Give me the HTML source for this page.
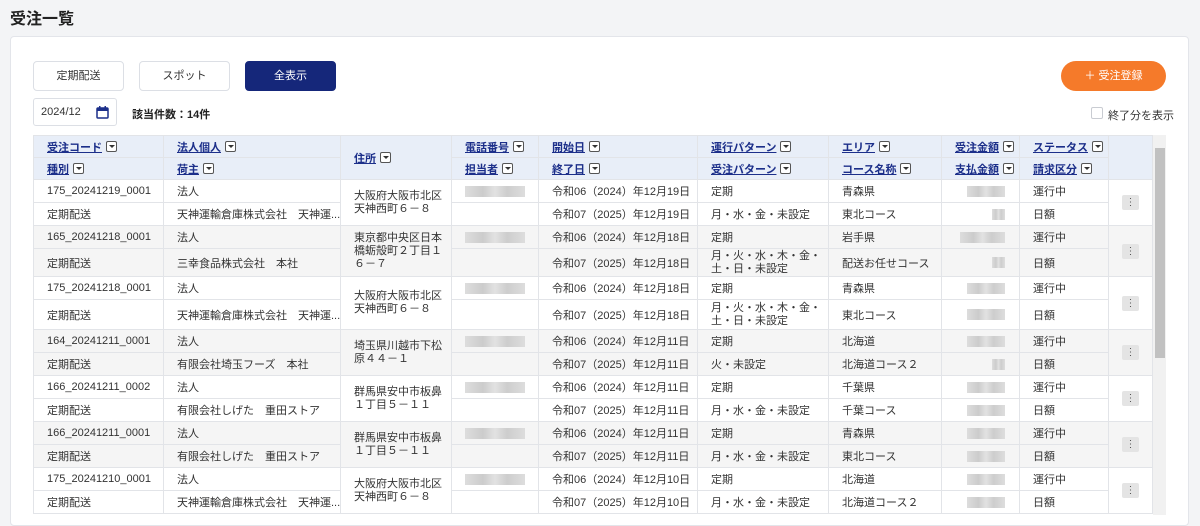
<!DOCTYPE html>
<html><head><meta charset="utf-8">
<style>
*{margin:0;padding:0;box-sizing:border-box}
body{width:1200px;height:515px;overflow:hidden;background:#f3f4f6;font-family:"Liberation Sans","Noto Sans CJK JP",sans-serif;color:#222;position:relative}
h1{position:absolute;left:10px;top:5px;font-size:16px;font-weight:bold;color:#222}
.panel{position:absolute;left:10px;top:36px;width:1179px;height:490px;background:#fff;border:1px solid #e3e5ea;border-radius:4px}
.btn{position:absolute;top:61px;height:30px;width:91px;border:1px solid #dcdfe5;border-radius:4px;background:#fff;font-size:11px;text-align:center;line-height:28px;color:#333}
.btn.on{background:#15277a;color:#fff;border-color:#15277a}
.date{position:absolute;left:33px;top:98px;width:84px;height:28px;border:1px solid #dcdfe5;border-radius:3px;font-size:11px;line-height:26px;padding-left:7px;color:#333}
.cnt{position:absolute;left:132px;top:106px;font-size:11px;font-weight:bold}
.reg{position:absolute;left:1061px;top:61px;width:105px;height:30px;border-radius:15px;background:#f57a2a;color:#fff;font-size:11px;text-align:center;line-height:30px}
.chk{position:absolute;left:1091px;top:107px;width:12px;height:12px;border:1px solid #c9ccd2;border-radius:2px;background:#fff}
.chkl{position:absolute;left:1108px;top:107px;font-size:11px;color:#333}
table{position:absolute;left:33px;top:135px;width:1119px;border-collapse:collapse;table-layout:fixed;font-size:11px}
td,th{border:1px solid #e2e4e8;padding:0 0 0 13px;text-align:left;font-weight:normal;white-space:nowrap;overflow:hidden;vertical-align:middle}
th{background:#e8eef8;height:22px;color:#1c2f8a;font-weight:bold}
th u{text-decoration:underline}
.dd{display:inline-block;width:11px;height:11px;border:1px solid #555;border-radius:2px;vertical-align:-1px;margin-left:4px;position:relative;background:#fff}
.dd:after{content:"";position:absolute;left:2px;top:3px;border-left:3px solid transparent;border-right:3px solid transparent;border-top:3.5px solid #333}
tr.g td{background:#f5f5f5}
td{height:23px;color:#333}
.bl{display:inline-block;width:60px;height:11px;background:linear-gradient(90deg,#ddd,#ccc 30%,#e2e2e2 50%,#cdcdcd 70%,#ddd);vertical-align:middle}
.am{text-align:right;padding-right:14px}
.am .bl{width:38px}
.am .sm{width:13px}
.kb{display:inline-block;width:17px;height:15px;background:#e4e4e4;border-radius:2px;text-align:center;line-height:15px;font-size:10px;color:#555}
.wrap{white-space:normal;line-height:13px}
.sb{position:absolute;left:1153px;top:135px;width:13px;height:380px;background:#f1f1f1}
.sbt{position:absolute;left:1155px;top:148px;width:10px;height:210px;background:#c1c1c1}
</style></head><body>
<h1>受注一覧</h1>
<div class="panel"></div>
<div class="btn" style="left:33px">定期配送</div>
<div class="btn" style="left:139px">スポット</div>
<div class="btn on" style="left:245px">全表示</div>
<div class="date">2024/12 <svg style="position:absolute;left:62px;top:7px" width="13" height="13" viewBox="0 0 13 13"><rect x="1" y="2" width="11" height="10" rx="1" fill="none" stroke="#1c2f8a" stroke-width="1.5"/><rect x="1" y="2" width="11" height="3" fill="#1c2f8a"/><rect x="3" y="0" width="1.5" height="3" fill="#1c2f8a"/><rect x="8.5" y="0" width="1.5" height="3" fill="#1c2f8a"/></svg></div>
<div class="cnt">該当件数：14件</div>
<div class="reg">＋ 受注登録</div>
<div class="chk"></div><div class="chkl">終了分を表示</div>
<table>
<colgroup><col style="width:130px"><col style="width:177px"><col style="width:111px"><col style="width:87px"><col style="width:159px"><col style="width:131px"><col style="width:113px"><col style="width:78px"><col style="width:89px"><col style="width:44px"></colgroup>
<tr><th><u>受注コード</u><span class="dd"></span></th><th><u>法人個人</u><span class="dd"></span></th><th rowspan="2"><u>住所</u><span class="dd"></span></th><th><u>電話番号</u><span class="dd"></span></th><th><u>開始日</u><span class="dd"></span></th><th><u>運行パターン</u><span class="dd"></span></th><th><u>エリア</u><span class="dd"></span></th><th><u>受注金額</u><span class="dd"></span></th><th><u>ステータス</u><span class="dd"></span></th><th rowspan="2"></th></tr>
<tr><th><u>種別</u><span class="dd"></span></th><th><u>荷主</u><span class="dd"></span></th><th><u>担当者</u><span class="dd"></span></th><th><u>終了日</u><span class="dd"></span></th><th><u>受注パターン</u><span class="dd"></span></th><th><u>コース名称</u><span class="dd"></span></th><th><u>支払金額</u><span class="dd"></span></th><th><u>請求区分</u><span class="dd"></span></th></tr>

<tr><td>175_20241219_0001</td><td>法人</td><td rowspan="2" class="wrap">大阪府大阪市北区<br>天神西町６－８</td><td><span class="bl"></span></td><td>令和06（2024）年12月19日</td><td>定期</td><td>青森県</td><td class="am"><span class="bl"></span></td><td>運行中</td><td rowspan="2"><span class="kb">⋮</span></td></tr>
<tr><td>定期配送</td><td>天神運輸倉庫株式会社　天神運...</td><td></td><td>令和07（2025）年12月19日</td><td>月・水・金・未設定</td><td>東北コース</td><td class="am"><span class="bl sm"></span></td><td>日額</td></tr>

<tr class="g"><td>165_20241218_0001</td><td>法人</td><td rowspan="2" class="wrap">東京都中央区日本<br>橋蛎殻町２丁目１<br>６－７</td><td><span class="bl"></span></td><td>令和06（2024）年12月18日</td><td>定期</td><td>岩手県</td><td class="am"><span class="bl" style="width:45px"></span></td><td>運行中</td><td rowspan="2"><span class="kb">⋮</span></td></tr>
<tr class="g"><td style="height:28px">定期配送</td><td>三幸食品株式会社　本社</td><td></td><td>令和07（2025）年12月18日</td><td class="wrap">月・火・水・木・金・<br>土・日・未設定</td><td>配送お任せコース</td><td class="am"><span class="bl sm"></span></td><td>日額</td></tr>

<tr><td>175_20241218_0001</td><td>法人</td><td rowspan="2" class="wrap">大阪府大阪市北区<br>天神西町６－８</td><td><span class="bl"></span></td><td>令和06（2024）年12月18日</td><td>定期</td><td>青森県</td><td class="am"><span class="bl"></span></td><td>運行中</td><td rowspan="2"><span class="kb">⋮</span></td></tr>
<tr><td style="height:30px">定期配送</td><td>天神運輸倉庫株式会社　天神運...</td><td></td><td>令和07（2025）年12月18日</td><td class="wrap">月・火・水・木・金・<br>土・日・未設定</td><td>東北コース</td><td class="am"><span class="bl"></span></td><td>日額</td></tr>

<tr class="g"><td>164_20241211_0001</td><td>法人</td><td rowspan="2" class="wrap">埼玉県川越市下松<br>原４４－１</td><td><span class="bl"></span></td><td>令和06（2024）年12月11日</td><td>定期</td><td>北海道</td><td class="am"><span class="bl"></span></td><td>運行中</td><td rowspan="2"><span class="kb">⋮</span></td></tr>
<tr class="g"><td>定期配送</td><td>有限会社埼玉フーズ　本社</td><td></td><td>令和07（2025）年12月11日</td><td>火・未設定</td><td>北海道コース２</td><td class="am"><span class="bl sm"></span></td><td>日額</td></tr>

<tr><td>166_20241211_0002</td><td>法人</td><td rowspan="2" class="wrap">群馬県安中市板鼻<br>１丁目５－１１</td><td><span class="bl"></span></td><td>令和06（2024）年12月11日</td><td>定期</td><td>千葉県</td><td class="am"><span class="bl"></span></td><td>運行中</td><td rowspan="2"><span class="kb">⋮</span></td></tr>
<tr><td>定期配送</td><td>有限会社しげた　重田ストア</td><td></td><td>令和07（2025）年12月11日</td><td>月・水・金・未設定</td><td>千葉コース</td><td class="am"><span class="bl"></span></td><td>日額</td></tr>

<tr class="g"><td>166_20241211_0001</td><td>法人</td><td rowspan="2" class="wrap">群馬県安中市板鼻<br>１丁目５－１１</td><td><span class="bl"></span></td><td>令和06（2024）年12月11日</td><td>定期</td><td>青森県</td><td class="am"><span class="bl"></span></td><td>運行中</td><td rowspan="2"><span class="kb">⋮</span></td></tr>
<tr class="g"><td>定期配送</td><td>有限会社しげた　重田ストア</td><td></td><td>令和07（2025）年12月11日</td><td>月・水・金・未設定</td><td>東北コース</td><td class="am"><span class="bl"></span></td><td>日額</td></tr>

<tr><td>175_20241210_0001</td><td>法人</td><td rowspan="2" class="wrap">大阪府大阪市北区<br>天神西町６－８</td><td><span class="bl"></span></td><td>令和06（2024）年12月10日</td><td>定期</td><td>北海道</td><td class="am"><span class="bl"></span></td><td>運行中</td><td rowspan="2"><span class="kb">⋮</span></td></tr>
<tr><td>定期配送</td><td>天神運輸倉庫株式会社　天神運...</td><td></td><td>令和07（2025）年12月10日</td><td>月・水・金・未設定</td><td>北海道コース２</td><td class="am"><span class="bl"></span></td><td>日額</td></tr>
</table>
<div class="sb"></div><div class="sbt"></div>
</body></html>
